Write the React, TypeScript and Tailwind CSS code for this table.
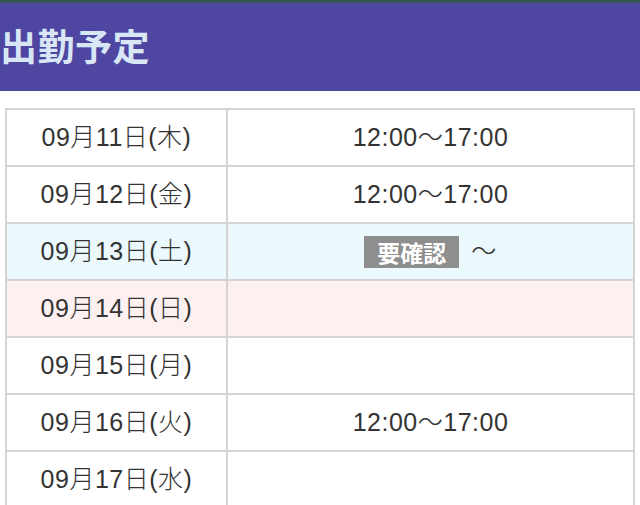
const rows = [
  { date: '09月11日(木)', time: '12:00〜17:00', bg: 'bg-white' },
  { date: '09月12日(金)', time: '12:00〜17:00', bg: 'bg-white' },
  { date: '09月13日(土)', time: 'check', bg: 'bg-[#ebf9fc]' },
  { date: '09月14日(日)', time: '', bg: 'bg-[#fcf0f0]' },
  { date: '09月15日(月)', time: '', bg: 'bg-white' },
  { date: '09月16日(火)', time: '12:00〜17:00', bg: 'bg-white' },
  { date: '09月17日(水)', time: '', bg: 'bg-white' },
]

export default function App() {
  return (
    <div className="w-[640px] h-[505px] overflow-hidden bg-white font-['Liberation_Sans','Noto_Sans_CJK_JP',sans-serif] text-[#333]">
      <div className="h-[3px] bg-[#345656]" />
      {/* Header */}
      <div className="h-[88px] bg-[#4f46a2] flex items-center pb-[4px]">
        <h1 className="text-[37px] font-bold leading-none text-[#d9e6f6] tracking-[0.5px] font-['Noto_Sans_CJK_JP',sans-serif]">
          出勤予定
        </h1>
      </div>

      {/* Schedule table */}
      <div className="pt-[17px] px-[5px]">
        <table className="w-[630px] border-collapse">
          <tbody>
            {rows.map((r) => (
              <tr key={r.date} className={r.bg}>
                <td className="w-[221px] h-[57px] border-2 border-[#d4d4d4] text-center text-[25px] font-light leading-none tracking-[0.5px]">
                  {r.date}
                </td>
                <td className="h-[57px] border-2 border-[#d4d4d4] text-center text-[25px] font-light leading-none tracking-[0.5px]">
                  {r.time === 'check' ? (
                    <span className="inline-flex items-center">
                      <span className="bg-[#8e8e8e] text-white font-bold px-[13px] py-[4px] text-[23px] leading-[24px] tracking-normal font-['Noto_Sans_CJK_JP',sans-serif]">
                        要確認
                      </span>
                      <span className="ml-[12px]">〜</span>
                    </span>
                  ) : (
                    r.time
                  )}
                </td>
              </tr>
            ))}
          </tbody>
        </table>
      </div>
    </div>
  )
}
